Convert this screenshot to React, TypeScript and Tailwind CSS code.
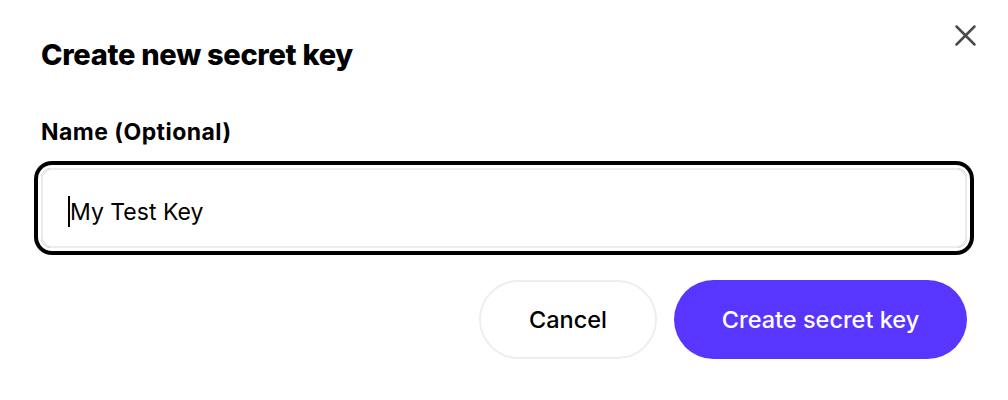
import React, { useState } from 'react';

// Modal body for naming and creating an API secret key
const CloseIcon = () => (
  <svg width="23" height="23" viewBox="0 0 23 23" fill="none" stroke="#4a4a4a" strokeWidth="2.5" strokeLinecap="round">
    <path d="M2.5 2.5l18 18M20.5 2.5l-18 18" />
  </svg>
);

export default function App() {
  const [name] = useState('My Test Key');

  return (
    <div className="relative w-[1008px] h-[400px] bg-white font-['Inter',sans-serif] text-black">
      <button className="absolute left-[954px] top-[24px] p-0" aria-label="Close">
        <CloseIcon />
      </button>

      <div className="pl-[41px] pr-[41px] pt-[37px]">
        <h2 className="text-[29px] leading-[35px] font-extrabold tracking-[-0.01em]">Create new secret key</h2>

        <label className="block mt-[46px] text-[23px] leading-[28px] font-bold tracking-[0.02em]">Name (Optional)</label>

        <div className="mt-[22px] h-[80px] rounded-[11px] border-2 border-[#ececec] ring-[4px] ring-black ring-offset-[3px] flex items-center pl-[25px] pt-[7px]">
          <span className="w-[2px] h-[31px] bg-black" />
          <span className="text-[23px] leading-[28px]">{name}</span>
        </div>

        <div className="mt-[32px] flex justify-end gap-[17px]">
          <button className="w-[178px] h-[79px] rounded-full border-2 border-[#eeeeee] bg-white text-[23.5px] font-medium text-black">
            Cancel
          </button>
          <button className="w-[293px] h-[79px] rounded-full bg-[#5836ff] text-[23.5px] font-medium text-white">
            Create secret key
          </button>
        </div>
      </div>
    </div>
  );
}
